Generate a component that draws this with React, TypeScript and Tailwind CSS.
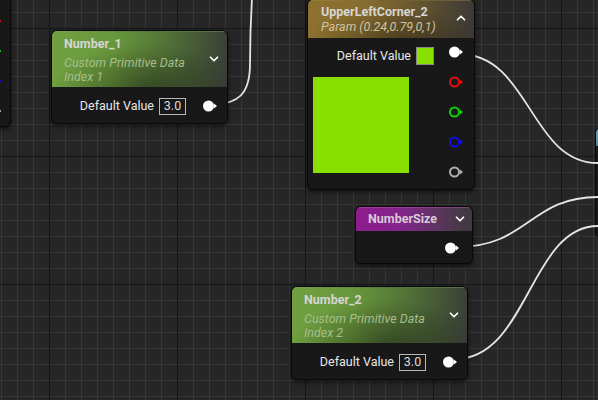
import React from "react";
import { ChevronDown, ChevronUp } from "lucide-react";

function Pin({ color = "#ffffff", filled = false }: { color?: string; filled?: boolean }) {
  return (
    <svg width="15" height="12" viewBox="0 0 15 12" className="block">
      {filled ? (
        <circle cx="5.5" cy="6" r="5.5" fill={color} />
      ) : (
        <circle cx="5.5" cy="6" r="4.5" fill="none" stroke={color} strokeWidth="2" />
      )}
      <path d="M11 3.5 L14 6 L11 8.5 Z" fill={color} />
    </svg>
  );
}

function ValueBox({ v }: { v: string }) {
  return (
    <div className="w-[27px] h-[17px] border border-[#b8b8b8] flex items-center justify-center text-[12.5px] text-[#dcdcdc] leading-none">
      {v}
    </div>
  );
}

const nodeBase =
  "absolute rounded-[6px] bg-[#171817] border border-[#080808] shadow-[0_2px_4px_rgba(0,0,0,0.6)] overflow-hidden";

const greenHeader =
  "bg-[radial-gradient(ellipse_55%_90%_at_55%_110%,rgba(20,25,15,0.55),transparent),linear-gradient(to_right,#70a040_0%,#68983c_35%,#506f37_68%,#3b3f38_100%)]";

function NumberNode({
  left,
  top,
  title,
  sub,
}: {
  left: number;
  top: number;
  title: string;
  sub: string;
}) {
  return (
    <div className={nodeBase} style={{ left, top, width: 177, height: 94 }}>
      <div className={`h-[56px] relative pl-[12px] pt-[3px] ${greenHeader} border-t border-[#8fb56a]/40`}>
        <div className="text-[12.5px] font-bold text-[#d6d6d6] leading-[18px]">{title}</div>
        <div className="mt-[3px] text-[12.5px] italic text-[#a9bd8c] leading-[14px] w-[135px]">{sub}</div>
        <ChevronDown size={14} strokeWidth={3} className="absolute right-[6px] top-[20px] text-white" />
      </div>
      <div className="h-[38px] flex items-center justify-end pr-[9px]">
        <span className="text-[12.5px] text-[#e8e8e8] mr-[5px]">Default Value</span>
        <ValueBox v="3.0" />
        <div className="ml-[17px]">
          <Pin filled />
        </div>
      </div>
    </div>
  );
}

export default function App() {
  return (
    <div
      className="relative w-[598px] h-[400px] overflow-hidden bg-[#262626]"
      style={{ fontFamily: "Roboto, 'Liberation Sans', sans-serif" }}
    >
      <svg className="absolute inset-0" width="598" height="400">
        <defs>
          <pattern id="minor" width="16" height="16" x="1" y="12" patternUnits="userSpaceOnUse">
            <path d="M0 0.5 H16 M0.5 0 V16" stroke="#353535" strokeWidth="1" />
          </pattern>
          <pattern id="major" width="128" height="128" x="49" y="28" patternUnits="userSpaceOnUse">
            <path d="M0 0.5 H128 M0.5 0 V128" stroke="#161616" strokeWidth="1" />
          </pattern>
        </defs>
        <rect width="598" height="400" fill="url(#minor)" />
        <rect width="598" height="400" fill="url(#major)" />
      </svg>

      {/* left partial node */}
      <div className="absolute left-[-40px] top-[-10px] w-[51px] h-[137px] rounded-[6px] bg-[#171817] border border-[#080808] shadow-[0_2px_4px_rgba(0,0,0,0.6)]">
        <div className="absolute right-[9px] top-[29px] w-[2px] h-[2px] bg-[#d01010]" />
        <div className="absolute right-[9px] top-[59px] w-[2px] h-[2px] bg-[#10c010]" />
        <div className="absolute right-[9px] top-[89px] w-[2px] h-[2px] bg-[#1010d0]" />
        <div className="absolute right-[9px] top-[119px] w-[2px] h-[2px] bg-[#a0a0a0]" />
      </div>

      {/* right partial node */}
      <div className="absolute left-[595px] top-[127px] w-[40px] h-[111px] rounded-[6px] bg-[#171817] border border-[#080808] overflow-hidden">
        <div className="h-[18px] bg-[linear-gradient(to_bottom,#7aa6c4,#4f7d9c)]" />
      </div>

      {/* wires */}
      <svg className="absolute inset-0 pointer-events-none" width="598" height="400">
        <g fill="none" stroke="#e4e4e4" strokeWidth="1.8">
          <path d="M214 104 C238 104 250 94 250 64 C250 35 251 15 252 -2" />
          <path d="M459 54 C530 54 530 163 598 163" />
          <path d="M457 247 C528 247 530 197 598 197" />
          <path d="M455 359 C528 359 530 226 598 226" />
        </g>
      </svg>

      <NumberNode left={51} top={30} title="Number_1" sub="Custom Primitive Data Index 1" />

      {/* UpperLeftCorner_2 */}
      <div className={nodeBase} style={{ left: 307, top: -1, width: 168, height: 191 }}>
        <div className="h-[38px] relative pl-[13px] pt-[2px] bg-[radial-gradient(ellipse_55%_90%_at_55%_110%,rgba(25,20,10,0.45),transparent),linear-gradient(to_right,#8d712f_0%,#866c2e_35%,#67572f_65%,#3c3a36_100%)] border-t border-[#b09050]/40">
          <div className="text-[12.5px] font-bold text-[#d6d6d6] leading-[18px]">UpperLeftCorner_2</div>
          <div className="text-[12.5px] italic text-[#cfc3a0] leading-[14px] -mt-[1px]">Param (0.24,0.79,0,1)</div>
          <ChevronUp size={14} strokeWidth={3} className="absolute right-[6px] top-[10px] text-white" />
        </div>
        <div className="flex pl-[5px]">
          <div className="w-[121px] flex flex-col pt-[9px]">
            <div className="flex items-center justify-end h-[18px]">
              <span className="text-[12.5px] text-[#e8e8e8] mr-[5px]">Default Value</span>
              <div className="w-[18px] h-[18px] bg-[#88e000] border border-[#8a8a8a]" />
            </div>
            <div className="mt-[12px] w-[96px] h-[96px] bg-[#88e000]" />
          </div>
          <div className="flex flex-col ml-[15px] pt-[8px] gap-[18px]">
            <Pin filled />
            <Pin color="#e01010" />
            <Pin color="#10d010" />
            <Pin color="#1010e0" />
            <Pin color="#b0b0b0" />
          </div>
        </div>
      </div>

      {/* NumberSize */}
      <div className={nodeBase} style={{ left: 355, top: 206, width: 118, height: 58 }}>
        <div className="h-[24px] relative pl-[12px] flex items-center bg-[linear-gradient(to_right,#8e1b8e_0%,#82258a_40%,#5d3560_70%,#3c3a3c_100%)] border-t border-[#c060c0]/40">
          <span className="text-[12.5px] font-bold text-[#d8c8d8] leading-none">NumberSize</span>
          <ChevronDown size={14} strokeWidth={3} className="absolute right-[5px] top-[4px] text-white" />
        </div>
        <div className="h-[34px] flex items-center justify-end pr-[12px]">
          <Pin filled />
        </div>
      </div>

      <NumberNode left={291} top={286} title="Number_2" sub="Custom Primitive Data Index 2" />
    </div>
  );
}
